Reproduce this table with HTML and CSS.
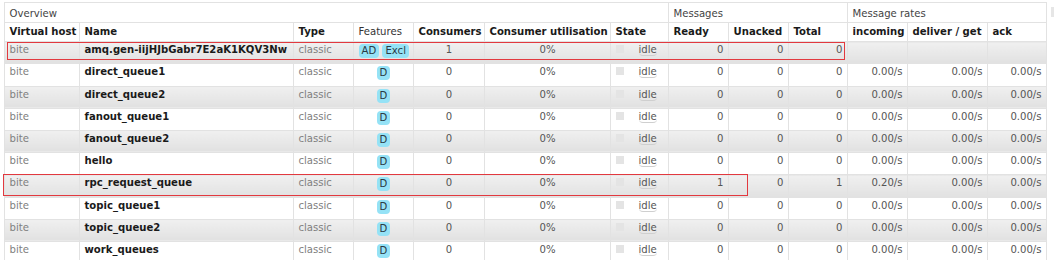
FILE: index.html
```html
<!DOCTYPE html>
<html>
<head>
<meta charset="utf-8">
<link rel="stylesheet" href="styles.css">
</head>
<body>
<div class="page">
  <div class="wrap">
    <table class="list">
      <colgroup>
        <col class="c-vhost"><col class="c-name"><col class="c-type"><col class="c-feat"><col class="c-cons"><col class="c-util"><col class="c-state"><col class="c-ready"><col class="c-unack"><col class="c-total"><col class="c-in"><col class="c-deliver"><col class="c-ack">
      </colgroup>
      <thead>
        <tr class="group">
          <th colspan="7">Overview</th>
          <th colspan="3">Messages</th>
          <th colspan="3">Message rates</th>
        </tr>
        <tr class="head">
          <th>Virtual host</th>
          <th>Name</th>
          <th>Type</th>
          <th class="plain">Features</th>
          <th>Consumers</th>
          <th>Consumer utilisation</th>
          <th>State</th>
          <th>Ready</th>
          <th>Unacked</th>
          <th>Total</th>
          <th>incoming</th>
          <th>deliver / get</th>
          <th>ack</th>
        </tr>
      </thead>
      <tbody>
        <tr class="alt1">
          <td class="vh">bite</td><td class="nm">amq.gen-iijHJbGabr7E2aK1KQV3Nw</td><td class="ty">classic</td>
          <td class="c"><span class="badge">AD</span> <span class="badge">Excl</span></td>
          <td class="c n">1</td><td class="c n">0%</td>
          <td class="st"><span class="sq"></span><span class="idle">idle</span></td>
          <td class="r n">0</td><td class="r n">0</td><td class="r n">0</td>
          <td></td><td></td><td></td>
        </tr>
        <tr class="alt2">
          <td class="vh">bite</td><td class="nm">direct_queue1</td><td class="ty">classic</td>
          <td class="c"><span class="badge">D</span></td>
          <td class="c n">0</td><td class="c n">0%</td>
          <td class="st"><span class="sq"></span><span class="idle">idle</span></td>
          <td class="r n">0</td><td class="r n">0</td><td class="r n">0</td>
          <td class="r n">0.00/s</td><td class="r n">0.00/s</td><td class="r n">0.00/s</td>
        </tr>
        <tr class="alt1">
          <td class="vh">bite</td><td class="nm">direct_queue2</td><td class="ty">classic</td>
          <td class="c"><span class="badge">D</span></td>
          <td class="c n">0</td><td class="c n">0%</td>
          <td class="st"><span class="sq"></span><span class="idle">idle</span></td>
          <td class="r n">0</td><td class="r n">0</td><td class="r n">0</td>
          <td class="r n">0.00/s</td><td class="r n">0.00/s</td><td class="r n">0.00/s</td>
        </tr>
        <tr class="alt2">
          <td class="vh">bite</td><td class="nm">fanout_queue1</td><td class="ty">classic</td>
          <td class="c"><span class="badge">D</span></td>
          <td class="c n">0</td><td class="c n">0%</td>
          <td class="st"><span class="sq"></span><span class="idle">idle</span></td>
          <td class="r n">0</td><td class="r n">0</td><td class="r n">0</td>
          <td class="r n">0.00/s</td><td class="r n">0.00/s</td><td class="r n">0.00/s</td>
        </tr>
        <tr class="alt1">
          <td class="vh">bite</td><td class="nm">fanout_queue2</td><td class="ty">classic</td>
          <td class="c"><span class="badge">D</span></td>
          <td class="c n">0</td><td class="c n">0%</td>
          <td class="st"><span class="sq"></span><span class="idle">idle</span></td>
          <td class="r n">0</td><td class="r n">0</td><td class="r n">0</td>
          <td class="r n">0.00/s</td><td class="r n">0.00/s</td><td class="r n">0.00/s</td>
        </tr>
        <tr class="alt2">
          <td class="vh">bite</td><td class="nm">hello</td><td class="ty">classic</td>
          <td class="c"><span class="badge">D</span></td>
          <td class="c n">0</td><td class="c n">0%</td>
          <td class="st"><span class="sq"></span><span class="idle">idle</span></td>
          <td class="r n">0</td><td class="r n">0</td><td class="r n">0</td>
          <td class="r n">0.00/s</td><td class="r n">0.00/s</td><td class="r n">0.00/s</td>
        </tr>
        <tr class="alt1">
          <td class="vh">bite</td><td class="nm">rpc_request_queue</td><td class="ty">classic</td>
          <td class="c"><span class="badge">D</span></td>
          <td class="c n">0</td><td class="c n">0%</td>
          <td class="st"><span class="sq"></span><span class="idle">idle</span></td>
          <td class="r n">1</td><td class="r n">0</td><td class="r n">1</td>
          <td class="r n">0.20/s</td><td class="r n">0.00/s</td><td class="r n">0.00/s</td>
        </tr>
        <tr class="alt2">
          <td class="vh">bite</td><td class="nm">topic_queue1</td><td class="ty">classic</td>
          <td class="c"><span class="badge">D</span></td>
          <td class="c n">0</td><td class="c n">0%</td>
          <td class="st"><span class="sq"></span><span class="idle">idle</span></td>
          <td class="r n">0</td><td class="r n">0</td><td class="r n">0</td>
          <td class="r n">0.00/s</td><td class="r n">0.00/s</td><td class="r n">0.00/s</td>
        </tr>
        <tr class="alt1">
          <td class="vh">bite</td><td class="nm">topic_queue2</td><td class="ty">classic</td>
          <td class="c"><span class="badge">D</span></td>
          <td class="c n">0</td><td class="c n">0%</td>
          <td class="st"><span class="sq"></span><span class="idle">idle</span></td>
          <td class="r n">0</td><td class="r n">0</td><td class="r n">0</td>
          <td class="r n">0.00/s</td><td class="r n">0.00/s</td><td class="r n">0.00/s</td>
        </tr>
        <tr class="alt2">
          <td class="vh">bite</td><td class="nm">work_queues</td><td class="ty">classic</td>
          <td class="c"><span class="badge">D</span></td>
          <td class="c n">0</td><td class="c n">0%</td>
          <td class="st"><span class="sq"></span><span class="idle">idle</span></td>
          <td class="r n">0</td><td class="r n">0</td><td class="r n">0</td>
          <td class="r n">0.00/s</td><td class="r n">0.00/s</td><td class="r n">0.00/s</td>
        </tr>
      </tbody>
    </table>
    <div class="mark mark-1"></div>
    <div class="mark mark-2"></div>
  </div>
  <div class="scroll-nub"></div>
</div>
</body>
</html>
```

FILE: styles.css
```css
html, body {
  margin: 0;
  padding: 0;
  background: #fff;
  overflow: hidden;
}

.page {
  display: flex;
  align-items: flex-start;
  gap: 4px;
  padding: 2px 0 0 4px;
}

.wrap {
  position: relative;
}

.list {
  border-collapse: collapse;
  table-layout: fixed;
  width: 1042px;
  font-family: "DejaVu Sans", Verdana, sans-serif;
  font-size: 10.1px;
  line-height: 12px;
  color: #222;
}

.c-vhost { width: 75px; }
.c-name { width: 214px; }
.c-type { width: 60px; }
.c-feat { width: 60px; }
.c-cons { width: 71px; }
.c-util { width: 126px; }
.c-state { width: 58px; }
.c-ready { width: 60px; }
.c-unack { width: 60px; }
.c-total { width: 59px; }
.c-in { width: 60px; }
.c-deliver { width: 80px; }
.c-ack { width: 59px; }

.list th,
.list td {
  border: 1px solid #e2e2e2;
  padding: 0 4.5px;
  white-space: nowrap;
  overflow: hidden;
}

.list th {
  text-align: left;
  vertical-align: bottom;
}

.group th {
  height: 19.5px;
  font-weight: normal;
  color: #444;
  padding-bottom: 2px;
  box-sizing: border-box;
}

.head th {
  height: 19.7px;
  font-weight: bold;
  color: #1a1a1a;
  padding-bottom: 3px;
  box-sizing: border-box;
}

.head th.plain {
  font-weight: normal;
  color: #333;
}

.list td {
  height: 22.2px;
  box-sizing: border-box;
  vertical-align: top;
  padding-top: 2px;
}

.alt1 td {
  background: linear-gradient(#f0f0f0, #e1e1e1);
}

.alt2 td {
  background: #fff;
}

.vh, .ty {
  color: #808080;
}

.nm {
  font-weight: bold;
  color: #1a1a1a;
}

.n {
  color: #555;
}

.c { text-align: center; }
.r { text-align: right; }

.badge {
  display: inline-block;
  line-height: 14px;
  padding: 0 3px;
  border-radius: 4px;
  background: #95e2f6;
  color: #2a3a44;
}

.st {
  color: #555;
}

.sq {
  display: inline-block;
  width: 8px;
  height: 8px;
  background: #e4e4e4;
  margin-right: 15px;
}

.idle {
  border-bottom: 1px solid #cfcfcf;
  border-radius: 0 0 4px 4px;
}

.mark {
  position: absolute;
  border: 1.5px solid #e2393f;
  pointer-events: none;
}

.mark-1 {
  left: 3px;
  top: 40px;
  width: 838px;
  height: 18px;
  box-sizing: border-box;
}

.mark-2 {
  left: -1px;
  top: 172px;
  width: 745px;
  height: 22px;
  box-sizing: border-box;
}

.scroll-nub {
  flex: none;
  width: 10px;
  height: 10px;
  margin-top: 5px;
  background: #e6e6e6;
}
```
